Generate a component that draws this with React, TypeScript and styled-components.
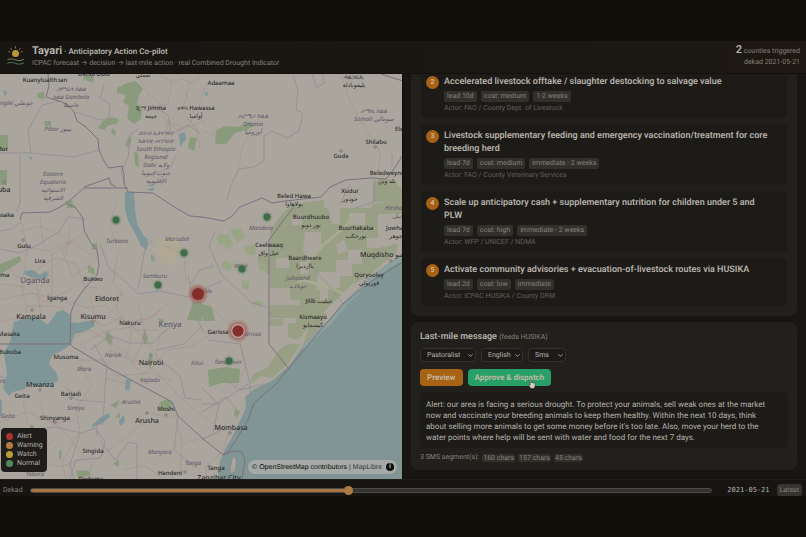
import React from "react";
import styled, { createGlobalStyle } from "styled-components";
import { ChevronDown } from "lucide-react";

const color = {
  letterbox: "#120e09",
  page: "#181612",
  card: "#22201c",
  inset: "#1d1b18",
  text: "#b5b1a9",
  soft: "#85817a",
  faint: "#625f58",
  tag: "#33302c",
  amber: "#a86213",
  orange: "#a87444",
  green: "#27a068",
};

const GlobalStyle = createGlobalStyle`
  * { box-sizing: border-box; }
  body { margin: 0; background: ${color.letterbox}; }
  button, input, select { font: inherit; color: inherit; margin: 0; text-rendering: inherit; }
  h1, h2, h3, p, ol, ul { margin: 0; padding: 0; font-size: inherit; list-style: none; }
`;

const Shell = styled.div`
  display: flex;
  flex-direction: column;
  height: 100vh;
  min-height: 480px;
  padding: 41px 0;
  background: ${color.letterbox};
  color: ${color.text};
  font-family: Roboto, Inter, sans-serif;
  font-size: 8px;
  line-height: 11px;
  text-rendering: geometricPrecision;
`;

const Header = styled.header`
  display: flex;
  align-items: center;
  gap: 7px;
  height: 33px;
  flex: none;
  padding: 0 6px 2px 7px;
  background: linear-gradient(90deg, #171612, #1d1812);
  border-bottom: 1px solid #13100c;
`;

const Brand = styled.div`
  flex: 1;
`;

const Title = styled.h1`
  font-size: 8px;
  font-weight: 600;
  line-height: 12px;
`;

const Name = styled.span`
  font-size: 11px;
  font-weight: 700;
`;

const Tagline = styled.p`
  color: ${color.soft};
  font-size: 7px;
  line-height: 10px;
`;

const Status = styled.div`
  color: ${color.soft};
  font-size: 7px;
  line-height: 11px;
  text-align: right;
`;

const Count = styled.strong`
  color: ${color.text};
  font-size: 11px;
  font-weight: 600;
`;

const Main = styled.main`
  display: grid;
  grid-template-columns: 1fr 1fr;
  grid-template-rows: minmax(0, 1fr);
  flex: 1;
  min-height: 0;
`;

const MapPane = styled.section`
  position: relative;
  overflow: hidden;
  border-right: 1px solid #13100c;
  background: #aaa69e;
`;

const MapSvg = styled.svg`
  display: block;
  width: 100%;
  height: 100%;
`;

const Legend = styled.ul`
  position: absolute;
  left: 1px;
  bottom: 7px;
  padding: 4px 4px 4px 5px;
  border-radius: 4px;
  background: #1e1d1a;
  font-size: 7px;
  line-height: 9px;
`;

const LegendItem = styled.li`
  display: flex;
  align-items: center;
  gap: 4px;
`;

const Swatch = styled.span<{ $tone: string }>`
  width: 7px;
  height: 7px;
  border-radius: 50%;
  background: ${(p) => p.$tone};
`;

const Attribution = styled.div`
  position: absolute;
  right: 5px;
  bottom: 5px;
  display: flex;
  align-items: center;
  gap: 4px;
  height: 14px;
  padding: 0 3px 0 4px;
  border-radius: 7px;
  background: #a5aaa6;
  color: #34383a;
  font-family: "Liberation Sans", sans-serif;
  font-size: 7px;
`;

const MapLink = styled.a<{ $strong?: boolean }>`
  color: ${(p) => (p.$strong ? "#080b0c" : "inherit")};
  text-decoration: none;
`;

const InfoButton = styled.button`
  display: grid;
  place-items: center;
  width: 8px;
  height: 8px;
  padding: 0;
  border: 0;
  border-radius: 50%;
  background: #0c0d0d;
  color: #b4b8b5;
  font-size: 7px;
  font-weight: 800;
  line-height: 8px;
`;

const Panel = styled.section`
  display: flex;
  flex-direction: column;
  justify-content: flex-end;
  gap: 6px;
  overflow: hidden;
  padding: 0 9px 9px 8px;
  background: ${color.page};
`;

const Card = styled.section`
  flex: none;
  padding: 9px;
  border-radius: 7px;
  background: ${color.card};
`;

const ActionList = styled.ol`
  display: grid;
  gap: 4px;
`;

const Action = styled.li`
  display: flex;
  gap: 5px;
  padding: 6px 15px 5px 5px;
  border: 1px solid #201e1a;
  border-radius: 5px;
  background: ${color.inset};
`;

const Rank = styled.span`
  display: grid;
  place-items: center;
  flex: none;
  width: 13px;
  height: 13px;
  border-radius: 50%;
  background: ${color.amber};
  color: #c9bba4;
  font-size: 7px;
  font-weight: 700;
`;

const ActionTitle = styled.h3`
  font-size: 9px;
  font-weight: 600;
  line-height: 13px;
`;

const Tags = styled.div`
  display: flex;
  gap: 4px;
  margin: 2px 0 1px;
`;

const Tag = styled.span`
  padding: 0 3px;
  border-radius: 2px;
  background: ${color.tag};
  color: ${color.soft};
  font-size: 7px;
  line-height: 11px;
`;

const Actor = styled.p`
  color: ${color.faint};
  font-size: 7px;
  line-height: 10px;
`;

const MessageCard = styled(Card)`
  display: flex;
  flex-direction: column;
  padding: 10px 9px 7px;
`;

const CardTitle = styled.h2`
  font-size: 9px;
  font-weight: 600;
  line-height: 11px;
`;

const Hint = styled.small`
  color: ${color.soft};
  font-size: 7px;
  font-weight: 400;
`;

const Fields = styled.div`
  display: flex;
  gap: 5px;
  margin: 5px 0 7px;
`;

const Field = styled.label`
  display: grid;
  grid-template-columns: 1fr;
  align-items: center;
  justify-items: end;

  > * { grid-area: 1 / 1; }
  svg { margin-right: 2px; pointer-events: none; }
`;

const Select = styled.select<{ $width: number }>`
  appearance: none;
  width: ${(p) => p.$width}px;
  height: 14px;
  padding: 0 6px;
  border: 1px solid #34322d;
  border-radius: 4px;
  background: ${color.inset};
  font-size: 7px;
  line-height: 12px;
`;

const Buttons = styled.div`
  display: flex;
  gap: 5px;
  margin-bottom: 6px;
`;

const Button = styled.button<{ $tone: string }>`
  position: relative;
  height: 17px;
  padding: 0 7px;
  border: 0;
  border-radius: 4px;
  background: ${(p) => p.$tone};
  color: #c3bba6;
  font-size: 8px;
  font-weight: 600;
  line-height: 17px;
`;

const Pointer = styled.svg`
  position: absolute;
  right: 15px;
  bottom: -3px;
`;

const Message = styled.p`
  padding: 7px 14px 5px 6px;
  border-radius: 4px;
  background: ${color.inset};
  font-size: 8px;
  line-height: 11px;
`;

const Segments = styled.div`
  display: flex;
  align-items: center;
  gap: 3px;
  margin-top: 4px;
  height: 11px;
  color: ${color.soft};
  font-size: 7px;
`;

const Segment = styled.span`
  padding: 0 1px;
  border-radius: 2px;
  background: ${color.tag};
  line-height: 8px;
`;

const Footer = styled.footer`
  display: flex;
  align-items: flex-start;
  gap: 7px;
  flex: none;
  height: 17px;
  padding: 4px 4px 0 3px;
  overflow: hidden;
  border-top: 1px solid #201e1a;
  background: #171511;
  font-size: 7px;
  line-height: 12px;
`;

const TimeLabel = styled.label`
  color: ${color.soft};
`;

const Slider = styled.input<{ $fill: number }>`
  appearance: none;
  flex: 1;
  min-width: 0;
  height: 12px;
  background: transparent;

  &::-webkit-slider-runnable-track {
    height: 5px;
    border: 1px solid #4b4a46;
    border-radius: 3px;
    background: linear-gradient(90deg, ${color.orange} ${(p) => p.$fill}%, #343330 ${(p) => p.$fill}%);
  }
  &::-webkit-slider-thumb {
    appearance: none;
    width: 9px;
    height: 9px;
    margin-top: -3px;
    border-radius: 50%;
    background: #b07a46;
  }
`;

const DateText = styled.output`
  width: 51px;
  font-family: "DejaVu Sans Mono", monospace;
  font-size: 7px;
  text-align: right;
`;

const Latest = styled.button`
  height: 12px;
  padding: 0 3px;
  border: 0;
  border-radius: 3px;
  background: #383531;
  color: ${color.soft};
  font-size: 7px;
  line-height: 12px;
`;

/* Map geometry */

const parks = [
  "M117 88l10-5 8-2 5 4 3 4-4 6-2 9 5 5-1 10-7 5-7-6 2-12-6-4 3-7-9-2z",
  "M103 121l9-4 7 2-2 5-8 1-5 5-6-2z",
  "M112 128l4 3-1 5-4-3z",
  "M85 75l9 1-1 7-10-4z",
  "M37 93l7-1 1 7-7-1z",
  "M216 131l8-5 14 1 13-5 3 4-8 4-11 3-9 11-11 0z",
  "M0 135h8v16H0zM0 170h7v15H0z",
  "M44 121h7v5h-6zM65 202l7-2 2 8h-7z",
  "M129 136l3 3-4 9-3-3zM134 152l4 1 1 14-4-2zM190 137l7 1-3 13-6-3z",
  "M193 302h9v19l-15-1z",
  "M202 304l10 3 3 14-11 0-3-6z",
  "M0 264l20-8 1 5-12 8-9 5zM92 244l5-1 1 6-6 1zM88 265l6 3 1 7-7-3z",
  "M151 254l3 2 1 6-4-2zM150 352l3 6-3 12-2-10z",
  "M160 402l8-3 5 5-6 7-9-2zM208 370l18-3 14 2-1 14-17 0-13 4z",
  "M110 405l10-5-4 8zM115 417l5-5v6zM59 450l3 1-1 9-2-1zM113 464l6-5 0 8z",
  "M76 470l12 1 4 4-14 3zM107 330l6 8-3 8-5-7zM145 329l3 10-3 6-3-7z",
  "M235 409l5 2-2 6-4-1zM158 318l6 2-3 5z",
];

const scrub = [
  "M294 204l30-4v8h48v-4l31-4v14h-24v24h-12v10h12l18-4v10l-13 8-14 13-19 10-20 20-22 22-11 13-10-3v-14h8v-5h-28v-8h32v-10h-10v-12h-20v-14h-4v-10h-8v-10h12v-24l14-18z",
  "M269 305h32v6h-32zM269 319h14v7h-14z",
  "M373 183l8-5 13 2 5 7 4 1v14h-30z",
  "M303 344l8-22 10-10 6 2-12 20-9 12zM253 374l14-6 12-18 9-6 12 0-12 20-16 14-10-2-12 8z",
];

const lightScrub = [
  "M220 235l9-1 4 10-3 6-10-7zM230 230l10-2 5 8-8 7zM244 246l12-2-1 12-9-2zM216 238l6-5 2 9-5 3z",
  "M224 260l9 4-3 7-9-4zM242 280l8 2-2 8-6-2zM260 263l8 4-1 5-8-2zM250 303l8-1-2 6zM254 300l10 2-4 6z",
];

const bare = [
  "M305 232h16v14l-8 14h-6l-4-10z",
  "M336 244l8-4 4 10-10 5z",
  "M349 213h16v12h-16z",
  "M318 272h18v-12h12v-10h14v14h-10v12h-12v12h-12v12h-8v-10h-4z",
  "M276 258h13v10h-13zM292 218l10-3v10h-10zM378 214h22v16h-10v10h-12z",
  "M328 208h12v16h-8zM300 262h8v12h-8z",
];

const lakes = [
  "M14 322l11-4 15 1 8 6 9-13 6-2 7 5 1 7 7 1 14-3 3 6-12 6-8 2-4 10-5 4-14 8-3 8 8 10 1 7-9 5-12 1-8-4-4 6-12 3-4 4-6-8 4-14-3-21 6-11z",
  "M125 192h9l1 16 2 16 7 12 4 3-1 11-6-4-4-9-9-16-3-12z",
  "M25 271l8-1 7 5 6-4 3 4-5 4-11-1-9-4z",
  "M92 425l8-7 9-5 1 4-8 6-9 4zM119 420l5-5 1 7-5 4zM126 379l5 1-2 11-4-2z",
  "M179 134l6-2 1 7-6 8zM0 399l2 2v14l-2 2zM3 90l4 2-2 5zM204 94l4-3-1 6zM147 186l8-3-1 3zM146 190l9-3-2 4z",
  "M28 156l5 2-2 2z",
];

const coast =
  "M403 254l-14 9-19 14-22 21-19 22-14 13-12 13-14 20-16 14-20 10-8 7 1 11-7 15-9 18-6 10-4 10-2 12-1 13h207z";

const borders = [
  "M48 74l1 12-3 11 13 4 8 3 7 8 3 9 9 6 6 6 6 6 1 11 5 11 5 7 13-2 2 9v9l4 8 25 1 23 15 14 8 12 1 22 4 8-5 8-9 22-9 10 5 13-2 36-4 9-10 16-7 25-2 15 1 8-10 10-16",
  "M128 188H84l-16 14-8 5-10 5-28 1-2 7M84 187l25-9 2 6 5 3",
  "M68 204l7 3 8 11 1 12 7 13 6 7 2 15-2 10-12 13-10 14-4 10-1 32H0M70 344l3 3 34 20 65 35 6 14 24 22 20 16",
  "M294 207l-12 15-13 18v104l20 25",
  "M403 262l-33 20-27 22-18 21-16 19-20 24-14 17-21 18-6 17-12 20-8 12-6 3",
  "M224 455l8-4 10 1 3 8-3 19M381 74l22 7",
];

const regions = [
  "M60 101l-18 4-8 14-6 12 3 22M0 153l30 0 44 4 25-7M20 154v50l-4 8",
  "M75 112l26 8 8-2 1-14-10-6 4-13",
  "M125 185l-4-14 7-13 2-23 9-6M176 155l-6 13-17 6M200 133l-12-8-17 10-3-20-16-10",
  "M293 76l5 14-2 20 7 3-4 18-12 7-15-7-8 5v25l-10 6-15 2-8 16-4 16M312 74l5 14 7-5-1-9",
  "M22 221l-10 8-12 2M0 249l20 4 18-8 22-14 8-14 16 2",
  "M100 244l9 24 17 14 12 12 22-3 28 6 10-7M188 275l4 22 4 20 8 15M138 290l7-42 8-8",
  "M215 232l-6 14 12 28 30 28 18 6M190 285l10-15 14-4M202 290l20-9",
  "M208 340l32 4 10 40 0 12M222 378l18 12 24-6M202 388l16 16 30-20M202 404h17l-6 28",
  "M202 412l24-15 10 12M202 440l16-9 8-6",
  "M107 368l-2 20-2 36-6 0v12M65 386l11 14 27 2M0 376l12 8 14-2",
  "M36 430l18-3 28 6 13-5 10 14-4 16-25 2-6 18M101 442l14 18 14-18 8 2v35M80 434l-10 30 4 15",
  "M178 416l-4 34 20 16M160 360l20 16 5 22 17 2M107 367l-13-23M157 350l27-6 18-18",
  "M90 350l20-14 20 7 22 0 20-18M374 180v22l-19 6M392 154v12M340 204l10-20M313 268l20 22 10 14",
];

const roads = [
  "M160 74l12 8 10-3 10 4 10-8M138 74l10 20 12 10 6 18 18 5M172 82l-4 22-18 4M190 84l-6 20-17 20-2 16M168 124l10 6 24-8M185 92l10 24-10 14",
  "M0 284l25 3 11-17 20-12 20 6 8 22 14 2M22 222l5 28-5 36 8 40M0 300l32-7 20 5 20-9M40 216l3 29 9 10 0 42",
  "M20 246l28 5 22-10 22 14M4 262l13 15 18 3M36 281l5 36M32 293l12 9 18-4 10 7M50 256l22-15M18 232l22-6 26 12",
  "M70 225l-4 30-20 20-8 20M84 232l-22 18 10 26 20-12M0 322l16-4 12-12 20 0 18 2",
  "M72 302l15 6 18-3 22 18 18 16 22 30M72 338l18-8 20 12 28 20M90 295l6 28 16 20-4 25M80 345l27-14 28-5 26-16",
  "M98 314l29 8 24-4 20-17M122 290l-6 18 16 24-6 27M138 305l8 30-14 28M110 350l18 8 12 14",
  "M152 367l16-17 24-4 24-15M152 367l18 20 26 24 20 14 14 9M151 368l-24 16-22-6M155 362l5-28 18-10",
  "M90 318l14 8 16-8 16 12 22 0M78 360l24 0 14 16 34-3 22 8",
  "M80 364l12 22-16 22 4 24-18 30 4 17M40 398l3 15 24 22 22 28M22 393l5 30 15 14-7 28M0 422l27-10 28 12 20-4",
  "M138 418l12-6 18 6 11-4M148 418l-20 18-36 26-4 17M176 418l6 24-2 32M230 429l-8 23-16 15 0 12M183 443l20-5 21-8",
  "M124 470l20-5 20 14M60 434l-36 34M0 462l30-3 30 8 22-8",
  "M206 84l-4 12-4 16 8 14M202 130l10 5 6-8M341 74l10 30 20 34 9 14-1 22M252 128l-10 20-4 20M186 116l10 12 4 20",
  "M116 245l-6-20 6-22M118 252l-5 30 10 14M164 245l20 10 2 30M198 294l20 20 20 17 8 36-12 23M218 332l20-2",
];

type MapLabel = {
  x: number;
  y: number;
  lines: string[];
  kind?: "city" | "town" | "region" | "country";
};

const labels: MapLabel[] = [
  { x: 45, y: 82, lines: ["Kuanylualthɔan"] },
  { x: 94, y: 76, lines: ["Denbi Dolo"] },
  { x: 71, y: 91, lines: ["ጋምቤላ ክልል", "ክልል Gambela", "جامبيلا"], kind: "region" },
  { x: 14, y: 105, lines: ["Jonglei جونقلي"], kind: "region" },
  { x: 58, y: 131, lines: ["Pibor بيبور"], kind: "region" },
  { x: 151, y: 110, lines: ["ጂማ Jimma", "جيمة"] },
  { x: 196, y: 110, lines: ["ሀዋሳ Hawassa", "أواسا"] },
  { x: 156, y: 135, lines: ["ደቡብ ኢትዮጵያ", "ክልላዊ መንግስት", "South Ethiopia", "Regional", "State ولاية", "جنوب إثيوبيا", "الإقليمية"], kind: "region" },
  { x: 53, y: 176, lines: ["Eastern", "Equatoria", "الاستوائية", "الشرقية"], kind: "region" },
  { x: 3, y: 151, lines: ["Bor"] },
  { x: 3, y: 192, lines: ["Juba"], kind: "city" },
  { x: 143, y: 77, lines: ["نقمتي"] },
  { x: 221, y: 85, lines: ["Adaamaa"] },
  { x: 253, y: 118, lines: ["ኦሮሚያ ክልል", "Oromia", "أوروميا"], kind: "region" },
  { x: 354, y: 79, lines: ["ዳልጋዴሊ", "بليفوبادلة"] },
  { x: 374, y: 113, lines: ["ሶማሊ ክልል", "Somali صومالي"], kind: "region" },
  { x: 376, y: 144, lines: ["Shilabo"] },
  { x: 341, y: 158, lines: ["Gode"] },
  { x: 399, y: 131, lines: ["Elx"] },
  { x: 387, y: 175, lines: ["Beledweyne", "بلد وين"] },
  { x: 350, y: 193, lines: ["Xudur", "حودور"] },
  { x: 294, y: 198, lines: ["Beled Hawa", "بولاهاوا"] },
  { x: 400, y: 210, lines: ["Hirshabelle", "شابيل"], kind: "region" },
  { x: 311, y: 219, lines: ["Buurdhuubo", "بور دوبو"] },
  { x: 356, y: 230, lines: ["Buurhakaba", "بورحكب"] },
  { x: 396, y: 230, lines: ["Jowhar", "جوهر"] },
  { x: 261, y: 230, lines: ["Mandera"], kind: "region" },
  { x: 269, y: 247, lines: ["Ceelwaaq", "عيل واق"] },
  { x: 305, y: 260, lines: ["Baardheere", "بااردىرا"] },
  { x: 389, y: 257, lines: ["Muqdisho مقديشو"], kind: "city" },
  { x: 369, y: 277, lines: ["Qoryooley", "قوريولي"] },
  { x: 298, y: 280, lines: ["Jubaland", "جوبالاند"], kind: "region" },
  { x: 319, y: 303, lines: ["Jilib جيليب"] },
  { x: 313, y: 319, lines: ["Kismaayo", "كيسمايو"] },
  { x: 241, y: 268, lines: ["Wajir"], kind: "region" },
  { x: 205, y: 293, lines: ["Isiolo"], kind: "region" },
  { x: 251, y: 336, lines: ["Garissa"], kind: "region" },
  { x: 218, y: 334, lines: ["Garissa"] },
  { x: 117, y: 243, lines: ["Turkana"], kind: "region" },
  { x: 177, y: 241, lines: ["Marsabit"], kind: "region" },
  { x: 155, y: 278, lines: ["Samburu"], kind: "region" },
  { x: 3, y: 217, lines: ["Masaka"] },
  { x: 24, y: 248, lines: ["Gulu"] },
  { x: 40, y: 263, lines: ["Lira"] },
  { x: 0, y: 277, lines: ["Hoima"] },
  { x: 35, y: 283, lines: ["Uganda"], kind: "country" },
  { x: 93, y: 281, lines: ["Bukwo"] },
  { x: 57, y: 300, lines: ["Iganga"] },
  { x: 107, y: 301, lines: ["Eldoret"], kind: "city" },
  { x: 31, y: 319, lines: ["Kampala"], kind: "city" },
  { x: 93, y: 319, lines: ["Kisumu"], kind: "city" },
  { x: 130, y: 325, lines: ["Nakuru"] },
  { x: 170, y: 327, lines: ["Kenya"], kind: "country" },
  { x: 9, y: 336, lines: ["Masaka"] },
  { x: 10, y: 354, lines: ["Bukoba"] },
  { x: 66, y: 359, lines: ["Musoma"] },
  { x: 113, y: 357, lines: ["Narok"], kind: "region" },
  { x: 151, y: 365, lines: ["Nairobi"], kind: "city" },
  { x: 197, y: 365, lines: ["Kitui"], kind: "region" },
  { x: 84, y: 371, lines: ["Mara"], kind: "region" },
  { x: 150, y: 382, lines: ["Kajiado"], kind: "region" },
  { x: -4, y: 383, lines: ["Kagera"], kind: "region" },
  { x: 40, y: 387, lines: ["Mwanza"], kind: "city" },
  { x: 22, y: 398, lines: ["Geita"] },
  { x: 71, y: 396, lines: ["Bariadi"] },
  { x: 76, y: 410, lines: ["Simiyu"], kind: "region" },
  { x: 131, y: 404, lines: ["Arusha"], kind: "region" },
  { x: 166, y: 411, lines: ["Moshi"] },
  { x: 147, y: 423, lines: ["Arusha"], kind: "city" },
  { x: 8, y: 418, lines: ["Geita"], kind: "region" },
  { x: 55, y: 420, lines: ["Shinyanga"] },
  { x: 93, y: 453, lines: ["Singida"] },
  { x: 160, y: 454, lines: ["Manyara"], kind: "region" },
  { x: 193, y: 465, lines: ["Tanga"], kind: "region" },
  { x: 170, y: 475, lines: ["Handeni"] },
  { x: 35, y: 476, lines: ["Tabora"], kind: "region" },
  { x: 91, y: 481, lines: ["Dodoma"] },
  { x: 228, y: 364, lines: ["Tana River"], kind: "region" },
  { x: 231, y: 430, lines: ["Mombasa"], kind: "city" },
  { x: 216, y: 470, lines: ["Tanga"] },
  { x: 219, y: 480, lines: ["Zanzibar City"], kind: "city" },
];

const normalCounties = [
  [116, 220],
  [267, 217],
  [184, 253],
  [158, 285],
  [242, 269],
  [229, 361],
];

const towns = [
  [23, 240], [32, 310], [93, 322], [4, 182], [341, 151], [375, 147], [391, 261], [151, 355],
  [40, 390], [32, 427], [55, 422], [71, 398], [147, 413], [166, 415], [230, 433], [185, 472],
];

const labelSize = { city: 7, country: 8, town: 6, region: 6 };
const labelFill = { city: "#2c2c2c", country: "#5a4f66", town: "#2c2c2c", region: "#5c5466" };

const MapText = styled.text<{ $kind: keyof typeof labelSize }>`
  font-family: "Noto Sans", "DejaVu Sans", sans-serif;
  font-size: ${(p) => labelSize[p.$kind]}px;
  font-style: ${(p) => (p.$kind === "region" ? "italic" : "normal")};
  font-weight: ${(p) => (p.$kind === "region" || p.$kind === "country" ? 400 : 500)};
  fill: ${(p) => labelFill[p.$kind]};
  text-anchor: middle;
`;

function RegionMap() {
  return (
    <MapSvg viewBox="0 74 402 405" preserveAspectRatio="xMidYMid slice" role="img" aria-label="Drought status map of East Africa">
      <defs>
        <radialGradient id="alertGlow">
          <stop offset="0.5" stopColor="#a04840" stopOpacity="0.7" />
          <stop offset="1" stopColor="#a04840" stopOpacity="0" />
        </radialGradient>
        <radialGradient id="normalGlow">
          <stop offset="0.5" stopColor="#527d56" stopOpacity="0.6" />
          <stop offset="1" stopColor="#527d56" stopOpacity="0" />
        </radialGradient>
      </defs>
      <rect x="-400" y="-326" width="1200" height="1200" fill="#aaa69e" />
      <path d="M160 240l15-6 5 12-6 20-10-2-8-12z" fill="#b5aa8e" opacity="0.6" />
      {scrub.map((d) => <path key={d} d={d} fill="#999f84" />)}
      {lightScrub.map((d) => <path key={d} d={d} fill="#9aa585" />)}
      {bare.map((d) => <path key={d} d={d} fill="#aaa69e" />)}
      {parks.map((d) => <path key={d} d={d} fill="#8a9b7d" />)}
      <path d="M306 264l18-20 22-18 8-12M283 292l20-12 22 6 20 8" fill="none" stroke="#a7aa90" strokeWidth="3" />
      <path d={coast} fill="#809594" />
      <path d="M403 257l-14 9-19 14-22 21-19 22-14 13-12 13" fill="none" stroke="#8da09d" strokeWidth="4" />
      {lakes.map((d) => <path key={d} d={d} fill="#7e9698" />)}
      <path d="M233 457l3 2-1 12-4 2 0-8z" fill="#aaa69e" stroke="#a88d87" strokeWidth="0.5" />
      <g fill="none" strokeLinejoin="round">
        {roads.map((d) => <path key={d} d={d} stroke="#a08583" strokeWidth="0.6" opacity="0.7" />)}
        {regions.map((d) => <path key={d} d={d} stroke="#8f8693" strokeWidth="0.7" />)}
        {borders.map((d) => <path key={d} d={d} stroke="#7a717e" strokeWidth="1" />)}
      </g>
      {towns.map(([x, y]) => (
        <circle key={`${x}-${y}`} cx={x} cy={y} r="1.3" fill="#aaa69e" stroke="#65615f" strokeWidth="0.6" />
      ))}
      {labels.map((label) => (
        <MapText key={`${label.x}-${label.y}`} x={label.x} y={label.y} $kind={label.kind ?? "town"}>
          {label.lines.map((line, i) => (
            <tspan key={line} x={label.x} dy={i === 0 ? 0 : 8}>{line}</tspan>
          ))}
        </MapText>
      ))}
      {normalCounties.map(([x, y]) => (
        <g key={`${x}-${y}`}>
          <circle cx={x} cy={y} r="6" fill="url(#normalGlow)" />
          <circle cx={x} cy={y} r="3.4" fill="#3f6c48" />
        </g>
      ))}
      <circle cx="198" cy="294" r="11" fill="url(#alertGlow)" />
      <circle cx="198" cy="294" r="6" fill="#842e2c" />
      <circle cx="238" cy="331" r="12" fill="url(#alertGlow)" />
      <circle cx="238" cy="331" r="6.3" fill="#842e2c" stroke="#b8aaa3" strokeWidth="1.2" />
    </MapSvg>
  );
}

function Logo() {
  return (
    <svg width="18" height="22" viewBox="0 0 18 22" fill="none" strokeLinecap="round" aria-hidden="true">
      <circle cx="8.5" cy="8.5" r="3.5" fill="#b5983a" />
      <path d="M8.5 1.5v1.6M3.7 3.3l1 1.4M13.3 3.3l-1 1.4M1.5 6.5l1.5.6M15.5 6.5l-1.5.6" stroke="#a06d2c" strokeWidth="0.9" />
      <path d="M.8 14.5c3-1 5-.6 7.7.4s5 1 8-.4" stroke="#6f8759" strokeWidth="1" />
      <path d="M.8 18c3-1 5-.6 7.7.4s5 1 8-.4" stroke="#54795c" strokeWidth="1" />
    </svg>
  );
}

const legend = [
  ["Alert", "#a8352e"],
  ["Warning", "#b87a43"],
  ["Watch", "#b89b38"],
  ["Normal", "#4f8a5b"],
];

const actions = [
  {
    rank: 2,
    title: "Accelerated livestock offtake / slaughter destocking to salvage value",
    tags: ["lead 10d", "cost: medium", "1-2 weeks"],
    actor: "FAO / County Dept. of Livestock",
  },
  {
    rank: 3,
    title: "Livestock supplementary feeding and emergency vaccination/treatment for core breeding herd",
    tags: ["lead 7d", "cost: medium", "immediate - 2 weeks"],
    actor: "FAO / County Veterinary Services",
  },
  {
    rank: 4,
    title: "Scale up anticipatory cash + supplementary nutrition for children under 5 and PLW",
    tags: ["lead 7d", "cost: high", "immediate - 2 weeks"],
    actor: "WFP / UNICEF / NDMA",
  },
  {
    rank: 5,
    title: "Activate community advisories + evacuation-of-livestock routes via HUSIKA",
    tags: ["lead 2d", "cost: low", "immediate"],
    actor: "ICPAC HUSIKA / County DRM",
  },
];

const fields = [
  { label: "Audience", width: 56, options: ["Pastoralist", "Farmer"] },
  { label: "Language", width: 42, options: ["English", "Swahili"] },
  { label: "Channel", width: 38, options: ["Sms", "Radio"] },
];

export default function App() {
  const [position, setPosition] = React.useState(467);

  return (
    <Shell>
      <GlobalStyle />
      <Header>
        <Logo />
        <Brand>
          <Title><Name>Tayari</Name> · Anticipatory Action Co-pilot</Title>
          <Tagline>ICPAC forecast → decision → last-mile action · real Combined Drought Indicator</Tagline>
        </Brand>
        <Status>
          <div><Count>2</Count> counties triggered</div>
          <div>dekad 2021-05-21</div>
        </Status>
      </Header>

      <Main>
        <MapPane>
          <RegionMap />
          <Legend>
            {legend.map(([name, tone]) => (
              <LegendItem key={name}><Swatch $tone={tone} />{name}</LegendItem>
            ))}
          </Legend>
          <Attribution>
            <span>
              <MapLink $strong href="#osm">© OpenStreetMap contributors</MapLink> | <MapLink href="#maplibre">MapLibre</MapLink>
            </span>
            <InfoButton aria-label="Toggle attribution">i</InfoButton>
          </Attribution>
        </MapPane>

        <Panel>
          <Card>
            <ActionList>
              {actions.map((action) => (
                <Action key={action.rank}>
                  <Rank>{action.rank}</Rank>
                  <div>
                    <ActionTitle>{action.title}</ActionTitle>
                    <Tags>{action.tags.map((tag) => <Tag key={tag}>{tag}</Tag>)}</Tags>
                    <Actor>Actor: {action.actor}</Actor>
                  </div>
                </Action>
              ))}
            </ActionList>
          </Card>

          <MessageCard>
            <CardTitle>Last-mile message <Hint>(feeds HUSIKA)</Hint></CardTitle>
            <Fields>
              {fields.map((field) => (
                <Field key={field.label}>
                  <Select $width={field.width} aria-label={field.label}>
                    {field.options.map((option) => <option key={option}>{option}</option>)}
                  </Select>
                  <ChevronDown size={7} strokeWidth={3} />
                </Field>
              ))}
            </Fields>
            <Buttons>
              <Button $tone={color.amber}>Preview</Button>
              <Button $tone={color.green}>
                Approve &amp; dispatch
                <Pointer width="8" height="10" viewBox="0 0 8 10" aria-hidden="true">
                  <path d="M2.2.8c.5-.5 1.2-.2 1.2.5v2.2l3 .6c.8.2 1 .7.9 1.4L6.8 8 6 9.4H2.8L.7 6.5c-.4-.7.4-1.2 1-.7l.4.5z" fill="#d2d0ca" stroke="#33322e" strokeWidth="0.6" />
                </Pointer>
              </Button>
            </Buttons>
            <Message>
              Alert: our area is facing a serious drought. To protect your animals, sell weak ones at the market now and
              vaccinate your breeding animals to keep them healthy. Within the next 10 days, think about selling more
              animals to get some money before it's too late. Also, move your herd to the water points where help will
              be sent with water and food for the next 7 days.
            </Message>
            <Segments>
              3 SMS segment(s):
              <Segment>160 chars</Segment>
              <Segment>157 chars</Segment>
              <Segment>45 chars</Segment>
            </Segments>
          </MessageCard>
        </Panel>
      </Main>

      <Footer>
        <TimeLabel htmlFor="dekad">Dekad</TimeLabel>
        <Slider
          id="dekad"
          type="range"
          min={0}
          max={1000}
          value={position}
          $fill={position / 10}
          onChange={(e) => setPosition(Number(e.target.value))}
        />
        <DateText htmlFor="dekad">2021-05-21</DateText>
        <Latest>Latest</Latest>
      </Footer>
    </Shell>
  );
}
